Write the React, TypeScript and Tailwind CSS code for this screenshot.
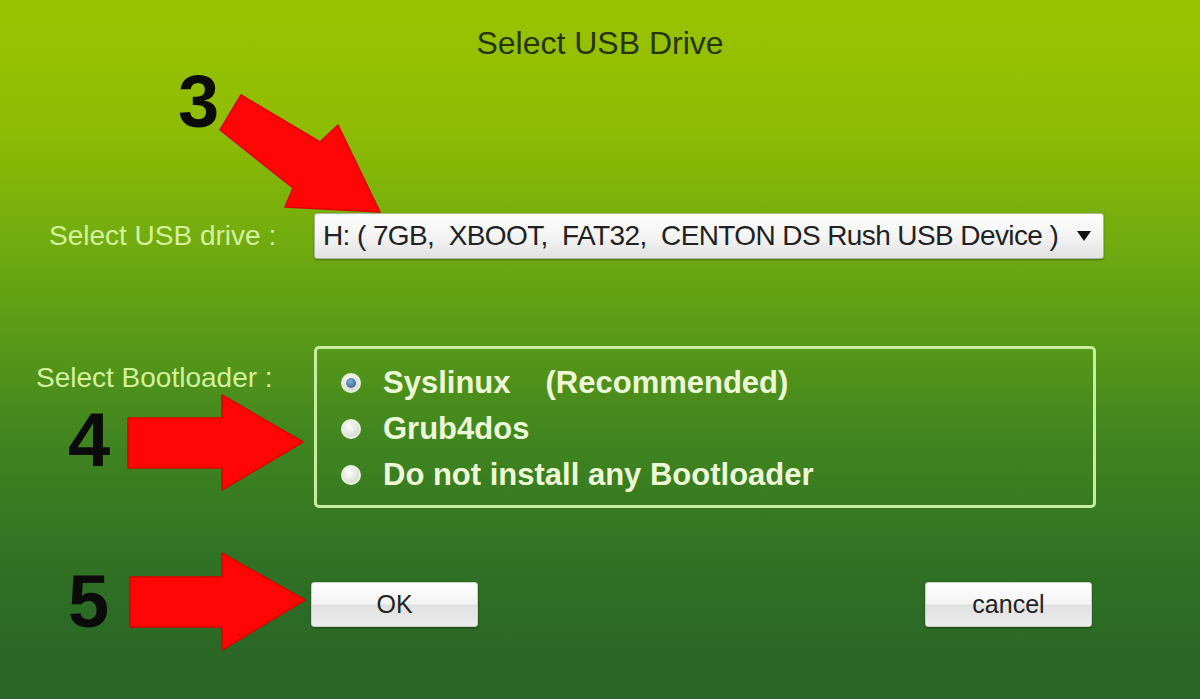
import React from 'react';

const options = [
  { label: 'Syslinux', extra: '(Recommended)', checked: true },
  { label: 'Grub4dos', checked: false },
  { label: 'Do not install any Bootloader', checked: false },
];

const Radio = ({ checked }: { checked: boolean }) => (
  <span className="flex h-[20px] w-[20px] shrink-0 items-center justify-center rounded-full border-2 border-[#e8f2dc] bg-[radial-gradient(circle_at_40%_35%,#ffffff,#c9cfc4)]">
    {checked && (
      <span className="h-[10px] w-[10px] rounded-full bg-[radial-gradient(circle_at_40%_35%,#7fb4da,#1d4f86)]" />
    )}
  </span>
);

const App = () => {
  return (
    <div className="relative h-[699px] w-[1200px] overflow-hidden bg-[linear-gradient(180deg,#9ac300_0%,#8fbd04_18%,#74ad0e_33%,#5a9a18_48%,#42861f_62%,#337624_76%,#2c6b25_88%,#2b6527_100%)] font-['Liberation_Sans',Arial,sans-serif]">
      <h1 className="pt-[26px] text-center text-[32px] leading-[34px] text-[#26350c]">Select USB Drive</h1>

      {/* drive row */}
      <div className="mt-[153px] flex items-center">
        <div className="w-[314px] pl-[49px] text-[28px] leading-[32px] text-[#d4f19e]">
          Select USB drive :
        </div>
        <div className="flex h-[46px] w-[790px] items-center justify-between rounded-[3px] border border-[#a9b59c] bg-[linear-gradient(180deg,#ffffff_0%,#f4f4f4_50%,#e2e2e2_100%)] pl-[8px] pr-[12px] shadow-[0_1px_2px_rgba(0,0,0,0.35)]">
          <span className="whitespace-pre text-[28px] leading-[30px] tracking-[-0.6px] text-[#222]">
            {'H: ( 7GB,  XBOOT,  FAT32,  CENTON DS Rush USB Device )'}
          </span>
          <svg width="14" height="10" viewBox="0 0 14 10">
            <path d="M0 0 L14 0 L7 10 Z" fill="#111" />
          </svg>
        </div>
      </div>

      {/* bootloader row */}
      <div className="mt-[87px] flex items-start">
        <div className="w-[314px] pl-[36px] pt-[16px] text-[28px] leading-[32px] text-[#d4f19e]">
          Select Bootloader :
        </div>
        <div className="h-[162px] w-[782px] rounded-[5px] border-[3px] border-[#c6eda0] pl-[24px] pt-[11px]">
          {options.map((o) => (
            <div key={o.label} className="flex h-[46px] items-center gap-[22px]">
              <Radio checked={o.checked} />
              <span className="whitespace-pre text-[31px] font-bold leading-[34px] text-[#ecf8d6]">
                {o.label}
                {o.extra && <span className="ml-[35px]">{o.extra}</span>}
              </span>
            </div>
          ))}
        </div>
      </div>

      {/* buttons */}
      <div className="mt-[74px] flex">
        <button className="ml-[311px] h-[45px] w-[167px] rounded-[3px] border border-[#c9d3c0] bg-[linear-gradient(180deg,#ffffff_0%,#f3f3f3_48%,#e1e1e1_52%,#ececec_100%)] text-[25px] text-[#222] shadow-[0_1px_2px_rgba(0,0,0,0.4)]">
          OK
        </button>
        <button className="ml-[447px] h-[45px] w-[167px] rounded-[3px] border border-[#c9d3c0] bg-[linear-gradient(180deg,#ffffff_0%,#f3f3f3_48%,#e1e1e1_52%,#ececec_100%)] text-[25px] text-[#222] shadow-[0_1px_2px_rgba(0,0,0,0.4)]">
          cancel
        </button>
      </div>

      {/* step annotations */}
      <svg className="pointer-events-none absolute inset-0" width="1200" height="699" viewBox="0 0 1200 699">
        <g fill="#ff0606" stroke="#e00000" strokeWidth="1.5" strokeLinejoin="round">
          <polygon points="241,95 320,142 338,125 380,212 285,207 293,188 220,130" />
          <polygon points="128,418 222,418 222,395 303,442 222,490 222,468 128,468" />
          <polygon points="130,577 222,577 222,553 305,600 222,650 222,627 130,627" />
        </g>
      </svg>
      <span className="absolute left-[178px] top-[65px] text-[74px] font-bold leading-none text-[#0b0b0b]">3</span>
      <span className="absolute left-[68px] top-[402px] text-[76px] font-bold leading-none text-[#0b0b0b]">4</span>
      <span className="absolute left-[68px] top-[565px] text-[74px] font-bold leading-none text-[#0b0b0b]">5</span>
    </div>
  );
};

export default App;
